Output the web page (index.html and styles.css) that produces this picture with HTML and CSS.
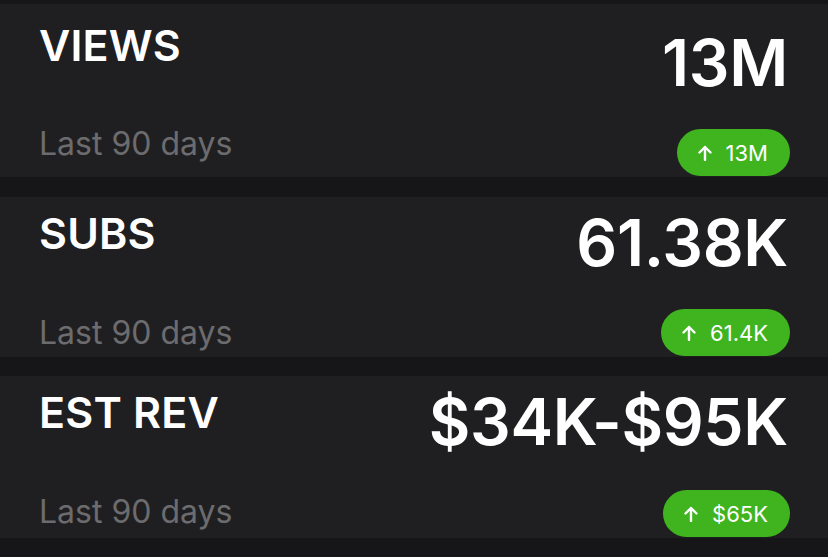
FILE: index.html
```html
<!DOCTYPE html>
<html>
	<head>
		<meta charset="UTF-8">
		<title>Stats</title>
		<link rel="stylesheet" href="styles.css">
	</head>
	<body>
		<div class="list">
			<div class="card card-first">
				<div class="row">
					<div class="title">VIEWS</div>
					<div class="value">13M</div>
				</div>
				<div class="row row-bottom">
					<div class="sub">Last 90 days</div>
					<div class="badge">
						<svg class="arrow" viewBox="0 0 14 16"><path d="M7 15V2M1.5 7.5L7 2l5.5 5.5"/></svg>
						<span>13M</span>
					</div>
				</div>
			</div>
			<div class="card">
				<div class="row">
					<div class="title">SUBS</div>
					<div class="value">61.38K</div>
				</div>
				<div class="row row-bottom">
					<div class="sub">Last 90 days</div>
					<div class="badge">
						<svg class="arrow" viewBox="0 0 14 16"><path d="M7 15V2M1.5 7.5L7 2l5.5 5.5"/></svg>
						<span>61.4K</span>
					</div>
				</div>
			</div>
			<div class="card card-last">
				<div class="row">
					<div class="title">EST REV</div>
					<div class="value">$34K-$95K</div>
				</div>
				<div class="row row-bottom">
					<div class="sub">Last 90 days</div>
					<div class="badge">
						<svg class="arrow" viewBox="0 0 14 16"><path d="M7 15V2M1.5 7.5L7 2l5.5 5.5"/></svg>
						<span>$65K</span>
					</div>
				</div>
			</div>
		</div>
	</body>
</html>
```
FILE: styles.css
```css
*{padding: 0;margin: 0;box-sizing: border-box;}
body{background: #161618;font-family: Inter, "Noto Sans", sans-serif;color: #fff;}

.list{display: flex;flex-direction: column;gap: 20px;padding-top: 4px;}

.card{height: 160px;background: #1f1f21;padding: 15px 38px 1px 39px;display: flex;flex-direction: column;justify-content: space-between;}
.card-first{height: 173px;padding-top: 20px;}
.card-last{height: 162px;margin-top: -1px;}

.row{display: flex;justify-content: space-between;align-items: flex-start;}
.row-bottom{align-items: center;}

.title{font-size: 43px;line-height: 1;font-weight: 600;letter-spacing: 0.2px;}
.value{font-size: 64px;line-height: 1;font-weight: 600;margin-right: 2px;margin-top: -1px;letter-spacing: -0.3px;}
.card-first .value{margin-top: 7px;}

.sub{font-size: 32px;line-height: 1;color: #6c6c6f;}
.card-first .sub{margin-top: -18px;}
.card-last .sub{margin-top: -4px;}

.badge{height: 47px;border-radius: 24px;background: #3fb41f;display: flex;align-items: center;gap: 14px;padding: 0 22px 0 21px;font-size: 22px;}
.arrow{width: 14px;height: 16px;fill: none;stroke: #fff;stroke-width: 2.4;stroke-linecap: round;stroke-linejoin: round;}
```
